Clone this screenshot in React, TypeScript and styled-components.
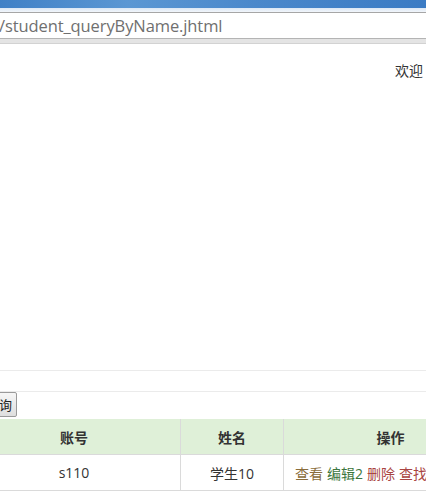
import React from "react";
import styled, { createGlobalStyle } from "styled-components";

const Global = createGlobalStyle`
  html, body { margin: 0; padding: 0; background: #fff; overflow: hidden; }
  body { font-family: "Open Sans", "Noto Sans CJK SC", sans-serif; font-size: 14px; color: #333; }
`;

const Page = styled.div`
  width: 426px;
  height: 493px;
  overflow: hidden;
  display: flex;
  flex-direction: column;
`;

const TitleBar = styled.div`
  height: 8px;
  background: linear-gradient(90deg, #3f80c6 0%, #5b97d3 30%, #4a88cb 60%, #3a7bc4 100%);
  flex: none;
`;

const TitleEdge = styled.div`
  height: 4px;
  background: linear-gradient(#dbe7f4, #f2f6fb);
  flex: none;
`;

const AddressBar = styled.div`
  height: 25px;
  border-top: 1px solid #a6a6a6;
  border-bottom: 1px solid #b4b4b4;
  background: #fff;
  display: flex;
  align-items: center;
  flex: none;
`;

const Url = styled.span`
  font-family: "Open Sans", "Liberation Sans", sans-serif;
  font-size: 16.5px;
  color: #6f6f6f;
  margin-left: -1px;
  letter-spacing: -0.1px;
  white-space: nowrap;
`;

const AddressShade = styled.div`
  height: 4px;
  background: #e4e4e4;
  border-bottom: 1px solid #d2d2d2;
  flex: none;
`;

const Content = styled.div`
  flex: 1;
  display: flex;
  flex-direction: column;
`;

const WelcomeRow = styled.div`
  display: flex;
  justify-content: flex-end;
  padding: 16px 3px 0 0;
  height: 310px;
  box-sizing: border-box;
  font-family: "Noto Sans CJK SC", sans-serif;
  font-size: 14px;
  line-height: 20px;
  color: #333;
`;

const Rule = styled.div`
  height: 1px;
  background: #ebebeb;
`;

const Spacer = styled.div<{ h: number }>`
  height: ${(p) => p.h}px;
`;

const Toolbar = styled.div`
  display: flex;
  height: 25px;
  margin-bottom: 2px;
`;

const QueryButton = styled.button`
  margin-left: -19px;
  height: 25px;
  padding: 0 4px;
  border: 1px solid #9a9a9a;
  border-radius: 2px;
  background: linear-gradient(#f6f6f6, #dedede);
  font-family: "Noto Sans CJK SC", sans-serif;
  font-size: 13px;
  color: #222;
  line-height: 20px;
`;

const Table = styled.table`
  border-collapse: collapse;
  margin-left: -33px;
  table-layout: fixed;
  width: 527px;
  font-family: "Open Sans", "Noto Sans CJK SC", sans-serif;
  font-size: 14px;
`;

const Th = styled.th<{ w: number }>`
  width: ${(p) => p.w}px;
  background: #dff0d8;
  border: 1px solid #dadada;
  border-top: none;
  height: 35px;
  padding: 0;
  font-weight: bold;
  color: #333;
  text-align: center;
  font-family: "Noto Sans CJK SC", sans-serif;
`;

const Td = styled.td<{ left?: boolean }>`
  border: 1px solid #dadada;
  height: 35px;
  padding: 0;
  padding-left: ${(p) => (p.left ? "11px" : "0")};
  text-align: ${(p) => (p.left ? "left" : "center")};
  color: #333;
  white-space: nowrap;
  overflow: hidden;
`;

const Link = styled.a<{ c: string }>`
  color: ${(p) => p.c};
  text-decoration: none;
  margin-right: 4px;
  font-family: "Open Sans", "Noto Sans CJK SC", sans-serif;
`;

export default function App() {
  return (
    <Page>
      <Global />
      <TitleBar />
      <TitleEdge />
      <AddressBar>
        <Url>/student_queryByName.jhtml</Url>
      </AddressBar>
      <AddressShade />
      <Content>
        <WelcomeRow>欢迎</WelcomeRow>
        <Spacer h={16} />
        <Rule />
        <Spacer h={20} />
        <Rule />
        <Toolbar>
          <QueryButton>查询</QueryButton>
        </Toolbar>
        <Table>
          <thead>
            <tr>
              <Th w={212}>账号</Th>
              <Th w={102}>姓名</Th>
              <Th w={213}>操作</Th>
            </tr>
          </thead>
          <tbody>
            <tr>
              <Td>s110</Td>
              <Td>学生10</Td>
              <Td left>
                <Link c="#8a6d3b">查看</Link>
                <Link c="#3c763d">编辑2</Link>
                <Link c="#a94442">删除</Link>
                <Link c="#a94442">查找</Link>
              </Td>
            </tr>
          </tbody>
        </Table>
      </Content>
    </Page>
  );
}
